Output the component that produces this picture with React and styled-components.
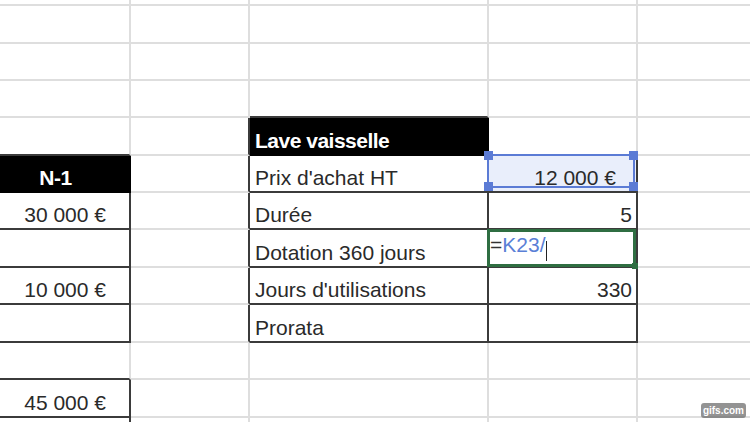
import styled, { createGlobalStyle } from "styled-components";

const GRID = "#dedede";
const INK = "#3b3b3b";

const GlobalStyle = createGlobalStyle`
  html, body {
    margin: 0;
    padding: 0;
    background: #fff;
  }
  body {
    font-family: "Liberation Sans", Arial, sans-serif;
  }
`;

const Page = styled.div`
  position: relative;
  width: 750px;
  height: 422px;
  overflow: hidden;
  background: #fff;
`;

const Sheet = styled.div`
  display: grid;
  grid-template-columns: 149px 119px 239px 149px 149px;
  grid-template-rows: 38px 38px 37px 37px 38px 37px 37px 38px 37px 38px 37px 38px 38px;
  margin: -32px 0 0 -18px;
`;

const Cell = styled.div`
  position: relative;
  box-sizing: border-box;
  display: flex;
  align-items: ${(p) => (p.$top ? "flex-start" : "flex-end")};
  justify-content: ${(p) =>
    p.$align === "right" ? "flex-end" : p.$align === "center" ? "center" : "flex-start"};
  padding: ${(p) => (p.$top ? 3 : 0)}px ${(p) => p.$pr ?? 4}px 1px ${(p) => p.$pl ?? 5}px;
  border-right: 2px solid ${(p) => (p.$head ? "#000" : p.$r ? INK : GRID)};
  border-bottom: 2px solid ${(p) => (p.$head ? "#000" : p.$b ? INK : GRID)};
  background: ${(p) => (p.$head ? "#000" : p.$sel ? "#e9eefb" : "#fff")};
  color: ${(p) => (p.$head ? "#fff" : "#2a2a2a")};
  font-weight: ${(p) => (p.$head ? 700 : 400)};
  letter-spacing: ${(p) => (p.$head ? "-0.5px" : "0")};
  font-size: 21px;
  line-height: 24px;
  white-space: nowrap;
`;

/* range highlight around the referenced cell */
const RangeBox = styled.div`
  position: absolute;
  top: -2px;
  left: -2px;
  right: 1px;
  bottom: 3px;
  border: 2px solid #5b7bd5;
  z-index: 3;
  pointer-events: none;
`;

const Knob = styled.span`
  position: absolute;
  width: 9px;
  height: 9px;
  background: #5b7bd5;
  ${(p) => (p.$y === "top" ? "top: -5px;" : "bottom: -5px;")}
  ${(p) => (p.$x === "left" ? "left: -5px;" : "right: -5px;")}
`;

const EditBox = styled.div`
  position: absolute;
  top: -1px;
  left: -2px;
  right: 0;
  bottom: -1px;
  border: 3px solid #2f6e42;
  z-index: 3;
  pointer-events: none;
`;

const FillHandle = styled.span`
  position: absolute;
  right: -5px;
  bottom: -5px;
  width: 6px;
  height: 6px;
  background: #2f6e42;
`;

const Eq = styled.span`
  color: #333;
`;

const Ref = styled.span`
  color: #5a7fd6;
`;

const Caret = styled.span`
  display: inline-block;
  width: 1px;
  height: 20px;
  margin-left: 1px;
  background: #222;
  vertical-align: -9px;
`;

const Watermark = styled.div`
  position: absolute;
  right: 4px;
  bottom: 4px;
  height: 15px;
  padding: 0 2px;
  border-radius: 3px;
  background: rgba(105, 105, 105, 0.72);
  color: #fff;
  font-size: 10px;
  font-weight: 700;
  line-height: 15px;
`;

const blank = {};
const rows = [
  [blank, blank, blank, blank, blank],
  [blank, blank, blank, blank, blank],
  [blank, blank, blank, blank, blank],
  [blank, blank, { b: 1 }, blank, blank],
  [{ b: 1 }, { r: 1 }, { text: "Lave vaisselle", head: 1 }, { b: 1 }, blank],
  [
    { text: "N-1", head: 1, align: "center", pl: 0, pr: 0 },
    { r: 1 },
    { text: "Prix d'achat HT", r: 1, b: 1 },
    { text: "12 000 €", align: "right", pr: 20, r: 1, b: 1, sel: 1 },
    blank,
  ],
  [
    { text: "30 000 €", align: "right", pr: 23, r: 1, b: 1 },
    { r: 1 },
    { text: "Durée", r: 1, b: 1 },
    { text: "5", align: "right", r: 1, b: 1 },
    blank,
  ],
  [
    { r: 1, b: 1 },
    { r: 1 },
    { text: "Dotation 360 jours", r: 1, b: 1 },
    { edit: 1, r: 1, b: 1 },
    blank,
  ],
  [
    { text: "10 000 €", align: "right", pr: 23, r: 1, b: 1 },
    { r: 1 },
    { text: "Jours d'utilisations", r: 1, b: 1 },
    { text: "330", align: "right", r: 1, b: 1 },
    blank,
  ],
  [
    { r: 1, b: 1 },
    { r: 1 },
    { text: "Prorata", r: 1, b: 1 },
    { r: 1, b: 1 },
    blank,
  ],
  [{ b: 1 }, blank, blank, blank, blank],
  [{ text: "45 000 €", align: "right", pr: 23, r: 1, b: 1 }, blank, blank, blank, blank],
  [{ r: 1 }, blank, blank, blank, blank],
];

const App = () => {
  return (
    <>
      <GlobalStyle />
      <Page>
        <Sheet>
          {rows.map((row, ri) =>
            row.map((c, ci) => (
              <Cell
                key={`${ri}-${ci}`}
                $head={c.head}
                $r={c.r}
                $b={c.b}
                $sel={c.sel}
                $top={c.edit}
                $align={c.align}
                $pr={c.pr}
                $pl={c.edit ? 1 : c.pl}
              >
                {c.text}
                {c.sel && (
                  <RangeBox>
                    <Knob $y="top" $x="left" />
                    <Knob $y="top" $x="right" />
                    <Knob $y="bottom" $x="left" />
                    <Knob $y="bottom" $x="right" />
                  </RangeBox>
                )}
                {c.edit && (
                  <>
                    <span>
                      <Eq>=</Eq>
                      <Ref>K23/</Ref>
                      <Caret />
                    </span>
                    <EditBox>
                      <FillHandle />
                    </EditBox>
                  </>
                )}
              </Cell>
            ))
          )}
        </Sheet>
        <Watermark>gifs.com</Watermark>
      </Page>
    </>
  );
};

export default App;
